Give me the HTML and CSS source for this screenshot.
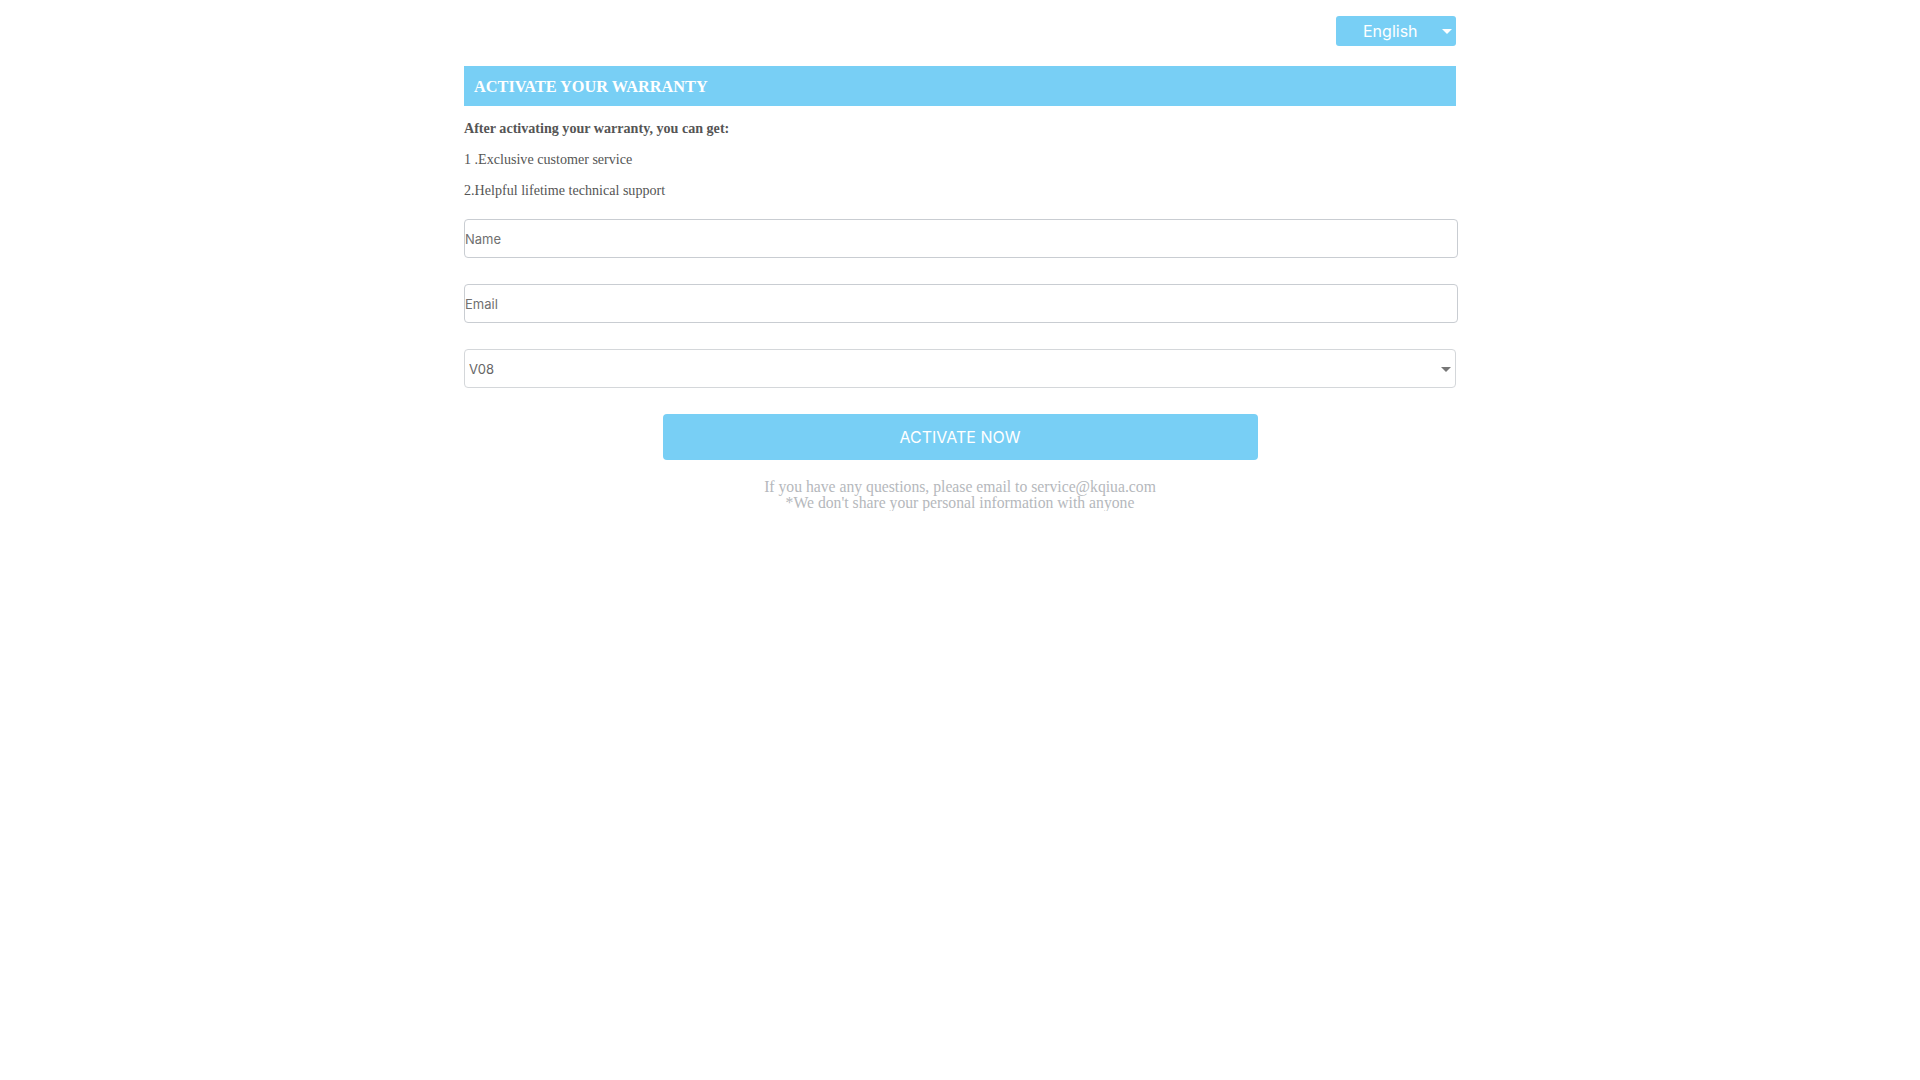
FILE: index.html
```html
<!DOCTYPE html>
<html lang="en">
<head>
<meta charset="utf-8">
<title>Activate Your Warranty</title>
<link rel="stylesheet" href="styles.css">
</head>
<body>
<div class="page">
  <div class="lang-row">
    <div class="lang"><span class="lang-text">English</span><span class="lang-caret"></span></div>
  </div>
  <div class="title-bar">ACTIVATE YOUR WARRANTY</div>
  <div class="info">
    <p class="info-lead">After activating your warranty, you can get:</p>
    <p>1 .Exclusive customer service</p>
    <p>2.Helpful lifetime technical support</p>
  </div>
  <form class="form">
    <input class="field" type="text" placeholder="Name">
    <input class="field" type="text" placeholder="Email">
    <div class="select-wrap">
      <select class="select"><option>V08</option></select>
    </div>
    <div class="btn-row"><button type="button" class="btn">ACTIVATE NOW</button></div>
  </form>
  <div class="footer">
    <div>If you have any questions, please email to service@kqiua.com</div>
    <div>*We don't share your personal information with anyone</div>
  </div>
</div>
</body>
</html>
```
FILE: styles.css
```css
html, body {
  margin: 0;
  padding: 0;
  background: #fff;
}
.page {
  width: 992px;
  margin: 0 auto;
  padding-top: 16px;
}
.lang-row {
  display: flex;
  justify-content: flex-end;
}
.lang {
  position: relative;
  width: 120px;
  height: 30px;
  background: #78cff5;
  border-radius: 3px;
  display: flex;
  align-items: center;
  box-sizing: border-box;
  padding-left: 27px;
  font-family: Inter, "Noto Sans", sans-serif;
  font-size: 16px;
  color: #fff;
}
.lang-caret {
  position: absolute;
  right: 4px;
  top: 13px;
  width: 0;
  height: 0;
  border-left: 5px solid transparent;
  border-right: 5px solid transparent;
  border-top: 5px solid #fff;
}
.title-bar {
  margin-top: 20px;
  height: 40px;
  line-height: 41px;
  background: #78cff5;
  color: #fff;
  padding-left: 10px;
  font-family: "Liberation Serif", serif;
  font-weight: bold;
  font-size: 16.3px;
}
.info {
  margin-top: 7px;
  font-family: "Liberation Serif", serif;
  font-size: 14.1px;
  color: #555;
}
.info p {
  margin: 0;
  line-height: 31px;
}
.info-lead {
  font-weight: bold;
}
.form {
  margin-top: 13px;
  display: flex;
  flex-direction: column;
  gap: 26px;
}
.field {
  display: block;
  box-sizing: content-box;
  width: 992px;
  height: 37px;
  margin: 0;
  padding: 0;
  border: 1px solid #c9cdd2;
  border-radius: 4px;
  font-family: Inter, "Noto Sans", sans-serif;
  font-size: 13px;
  color: #333;
  outline: none;
}
.field::placeholder {
  color: #707070;
}
.select-wrap {
  position: relative;
}
.select {
  display: block;
  width: 992px;
  height: 39px;
  margin: 0;
  padding: 0 4px;
  border: 1px solid #d4d7da;
  border-radius: 4px;
  background: #fff;
  font-family: Inter, "Noto Sans", sans-serif;
  font-size: 13px;
  color: #666;
  -webkit-appearance: none;
  appearance: none;
  outline: none;
}
.select-wrap::after {
  content: "";
  position: absolute;
  right: 5px;
  top: 18px;
  width: 0;
  height: 0;
  border-left: 5px solid transparent;
  border-right: 5px solid transparent;
  border-top: 5px solid #777;
  pointer-events: none;
}
.btn-row {
  display: flex;
  justify-content: center;
}
.btn {
  width: 595px;
  height: 46px;
  border: none;
  border-radius: 4px;
  background: #78cff5;
  color: #fff;
  font-family: Inter, "Noto Sans", sans-serif;
  font-size: 16px;
  cursor: pointer;
}
.footer {
  margin-top: 19px;
  text-align: center;
  font-family: "Liberation Serif", serif;
  font-size: 15.7px;
  line-height: 16px;
  color: #b5b8bc;
}
```
